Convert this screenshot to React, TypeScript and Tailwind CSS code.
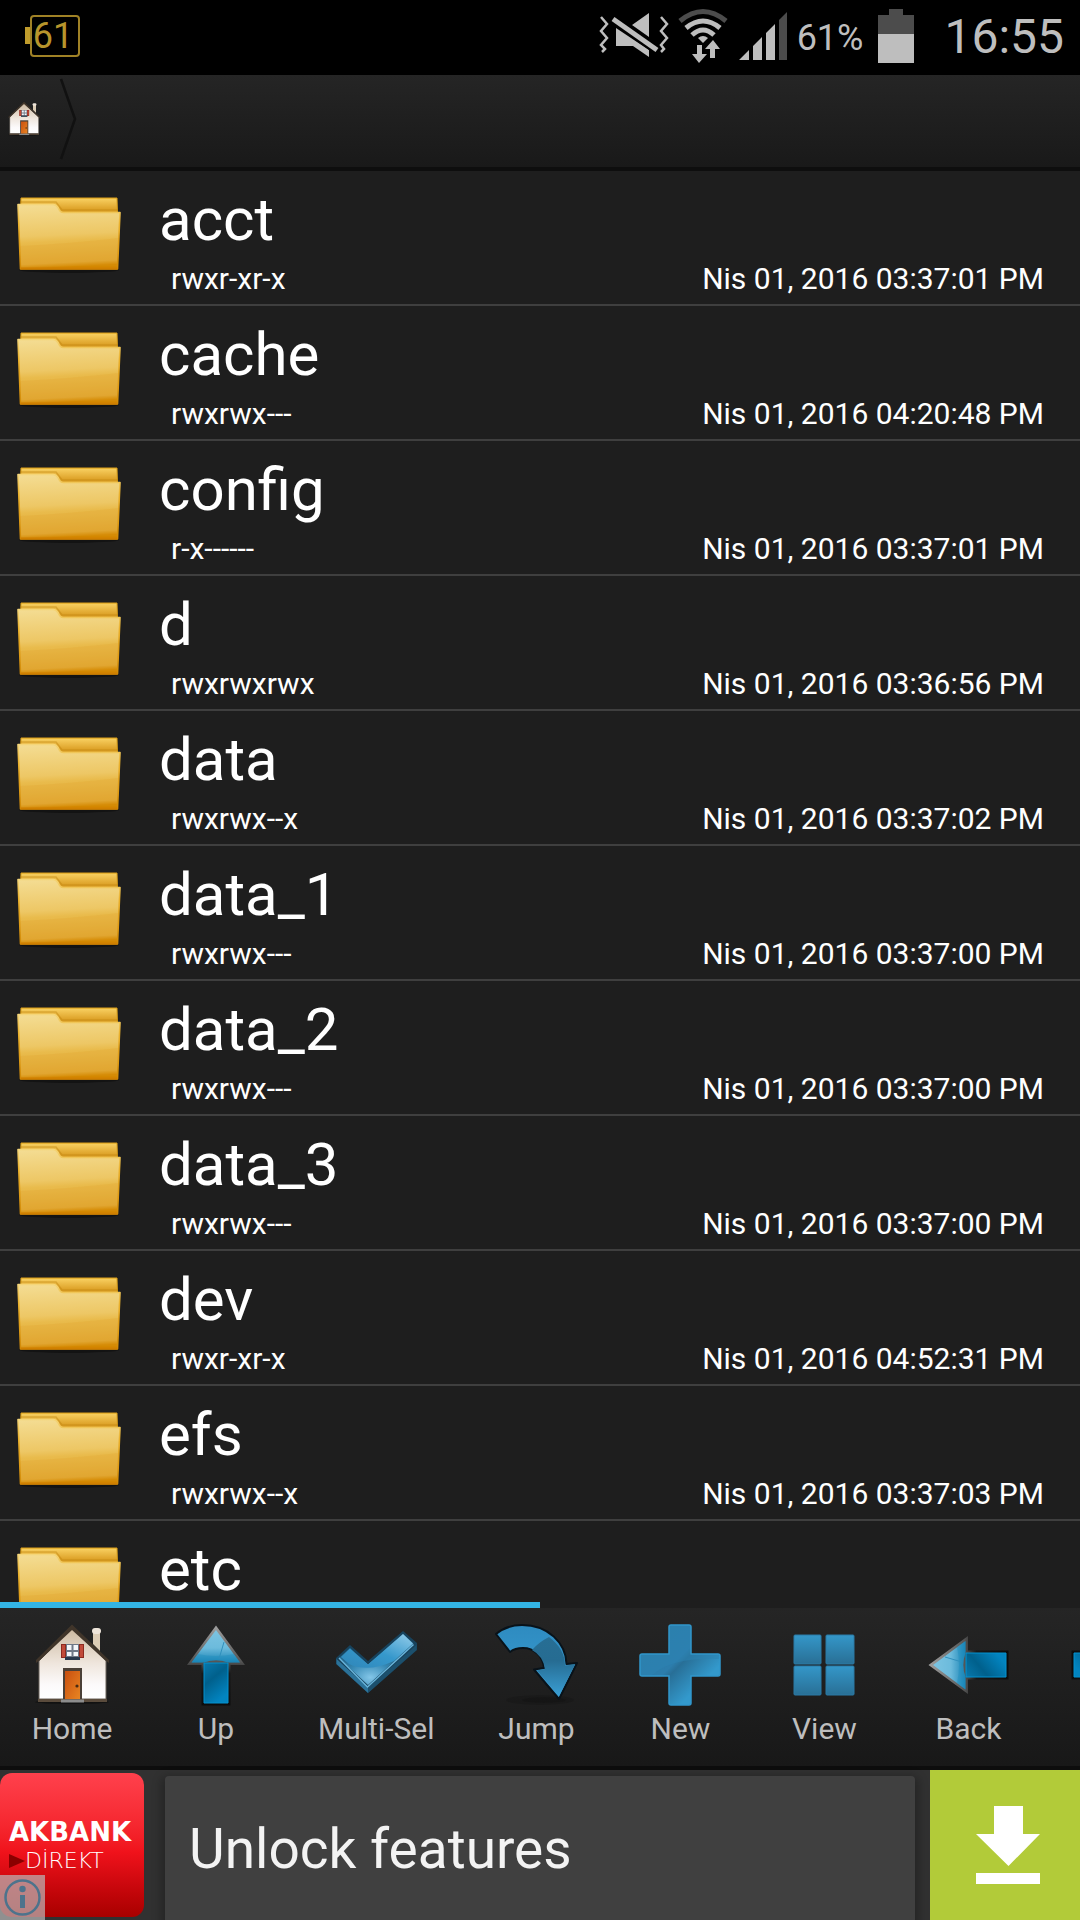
import React from 'react';

interface Entry {
  name: string;
  perms: string;
  time: string;
}

const entries: Entry[] = [
  { name: 'acct', perms: 'rwxr-xr-x', time: '03:37:01 PM' },
  { name: 'cache', perms: 'rwxrwx---', time: '04:20:48 PM' },
  { name: 'config', perms: 'r-x------', time: '03:37:01 PM' },
  { name: 'd', perms: 'rwxrwxrwx', time: '03:36:56 PM' },
  { name: 'data', perms: 'rwxrwx--x', time: '03:37:02 PM' },
  { name: 'data_1', perms: 'rwxrwx---', time: '03:37:00 PM' },
  { name: 'data_2', perms: 'rwxrwx---', time: '03:37:00 PM' },
  { name: 'data_3', perms: 'rwxrwx---', time: '03:37:00 PM' },
  { name: 'dev', perms: 'rwxr-xr-x', time: '04:52:31 PM' },
  { name: 'efs', perms: 'rwxrwx--x', time: '03:37:03 PM' },
  { name: 'etc', perms: '', time: '' },
];

// Gradients shared by all the icons
const IconDefs = () => (
  <svg width="0" height="0" className="absolute" aria-hidden="true">
    <defs>
      <linearGradient id="folderBack" x1="0" y1="0" x2="0" y2="1">
        <stop offset="0" stopColor="#f3c344" />
        <stop offset="0.04" stopColor="#f6cc5c" />
        <stop offset="0.3" stopColor="#dfa52c" />
        <stop offset="1" stopColor="#c98200" />
      </linearGradient>
      <linearGradient id="folderFront" x1="0" y1="0" x2="0.08" y2="1">
        <stop offset="0" stopColor="#f4dd94" />
        <stop offset="0.5" stopColor="#edc765" />
        <stop offset="0.6" stopColor="#e9bb4c" />
        <stop offset="0.93" stopColor="#e2a935" />
        <stop offset="1" stopColor="#d48800" />
      </linearGradient>
      <linearGradient id="folderEdge" x1="0" y1="0" x2="0" y2="1">
        <stop offset="0" stopColor="#f5d679" />
        <stop offset="0.3" stopColor="#eab02a" />
        <stop offset="1" stopColor="#d28a06" />
      </linearGradient>
      <linearGradient id="wall" x1="0" y1="0" x2="0" y2="1">
        <stop offset="0" stopColor="#cbb89f" />
        <stop offset="0.5" stopColor="#efe6dd" />
        <stop offset="0.8" stopColor="#fcfafb" />
        <stop offset="1" stopColor="#ffffff" />
      </linearGradient>
      <linearGradient id="door" x1="0" y1="0" x2="1" y2="1">
        <stop offset="0" stopColor="#c94f10" />
        <stop offset="1" stopColor="#e98622" />
      </linearGradient>
      <linearGradient id="arrowHead" x1="0" y1="0" x2="0" y2="1">
        <stop offset="0" stopColor="#7cc4e2" />
        <stop offset="0.55" stopColor="#6cbbdc" />
        <stop offset="1" stopColor="#1782b4" />
      </linearGradient>
      <linearGradient id="arrowShaft" x1="0" y1="0" x2="0.5" y2="1">
        <stop offset="0" stopColor="#0878ac" />
        <stop offset="0.45" stopColor="#00608c" />
        <stop offset="1" stopColor="#0284c0" />
      </linearGradient>
      <linearGradient id="arrowEdge" x1="0" y1="0" x2="0" y2="1">
        <stop offset="0" stopColor="#a0a0a0" />
        <stop offset="0.45" stopColor="#555555" />
        <stop offset="0.6" stopColor="#181818" />
        <stop offset="1" stopColor="#0c0c0c" />
      </linearGradient>
      <linearGradient id="checkFace" x1="0" y1="1" x2="1" y2="0">
        <stop offset="0" stopColor="#2f86b8" />
        <stop offset="0.5" stopColor="#3698cc" />
        <stop offset="1" stopColor="#94cdea" />
      </linearGradient>
      <radialGradient id="checkGlow" cx="0.42" cy="0.85" r="0.5">
        <stop offset="0" stopColor="#83c6e8" />
        <stop offset="0.6" stopColor="#3588b4" />
        <stop offset="1" stopColor="#22668c" />
      </radialGradient>
      <linearGradient id="jump" x1="0" y1="0" x2="0" y2="1">
        <stop offset="0" stopColor="#2e8bc0" />
        <stop offset="1" stopColor="#3a9ed4" />
      </linearGradient>
      <linearGradient id="jumpShade" x1="0" y1="0" x2="0" y2="1">
        <stop offset="0" stopColor="#276e94" />
        <stop offset="0.4" stopColor="#266c92" />
        <stop offset="1" stopColor="#3a9ed4" />
      </linearGradient>
      <linearGradient id="plus" x1="0" y1="0" x2="1" y2="1">
        <stop offset="0" stopColor="#2b7ba5" />
        <stop offset="0.45" stopColor="#2c7dac" />
        <stop offset="0.5" stopColor="#286f97" />
        <stop offset="0.75" stopColor="#3399cc" />
        <stop offset="1" stopColor="#3399cc" />
      </linearGradient>
      <linearGradient id="tile" x1="0" y1="0" x2="0" y2="1">
        <stop offset="0" stopColor="#3497c9" />
        <stop offset="1" stopColor="#296f95" />
      </linearGradient>
    </defs>
  </svg>
);

const FolderIcon = () => (
  <svg viewBox="0 0 108 84" className="h-[84px] w-[108px] shrink-0" aria-hidden="true">
    <ellipse cx="54" cy="77" rx="50" ry="3" fill="#000000" opacity="0.35" />
    <path d="M6 5 H102 L103 40 H5 Z" fill="url(#folderBack)" stroke="#d99d18" strokeWidth="1" />
    <path d="M5 9 H41 L47 17 H103" fill="none" stroke="#b97c08" strokeWidth="1.5" opacity="0.4" />
    <path
      d="M3 11.500 H38 Q41 11.500 43 14.500 Q45 19.500 48.500 19.500 H105 L102.500 76 H5.500 Z"
      fill="url(#folderFront)"
      stroke="url(#folderEdge)"
      strokeWidth="1.600"
      strokeLinejoin="round"
    />
    <path d="M5 53 Q60 50 104 45 L102 73 H6 Z" fill="#dc9a22" opacity="0.18" />
    <path d="M5.500 75.500 H102.500" stroke="#cf7f00" strokeWidth="2" />
  </svg>
);

const HouseIcon = ({ className }: { className: string }) => (
  <svg viewBox="0 0 84 84" className={className} aria-hidden="true">
    <ellipse cx="42" cy="79" rx="37" ry="2" fill="#000000" opacity="0.4" />
    <path d="M63 9 H70 V28 L63 21 Z" fill="#dccdb6" />
    <rect x="62" y="5" width="9" height="6" rx="3" fill="#eee5da" />
    <path d="M9 38 L42 5 L76 38 V76 H9 Z" fill="url(#wall)" stroke="#6d655d" strokeWidth="1" />
    <path d="M6 40 V37 L42 1.500 L79 37 V40 L75 37 L42 7 L10 37 Z" fill="#40352a" />
    <rect x="31" y="21" width="23" height="14" fill="#8c2a1f" />
    <rect x="32" y="22" width="3" height="12" fill="#c14a39" />
    <rect x="50" y="22" width="3" height="12" fill="#c14a39" />
    <rect x="36" y="21" width="13" height="14" fill="#6e7887" />
    <path d="M37 22 H41.500 V27 H37 Z M43.500 22 H48 V27 H43.500 Z M37 29 H41.500 V33 H37 Z M43.500 29 H48 V33 H43.500 Z" fill="#f3f6fa" />
    <rect x="35" y="34" width="15" height="3" fill="#28384c" />
    <rect x="33" y="45" width="19" height="33" fill="#4a4038" />
    <rect x="35" y="48" width="15" height="29" fill="url(#door)" />
    <circle cx="47" cy="63" r="1.600" fill="#4a2a12" />
    <rect x="8" y="76" width="69" height="3" fill="#5a4b3c" />
    <rect x="31" y="76.500" width="23" height="3" fill="#8c8c8c" />
  </svg>
);

const ArrowIcon = ({ turn = '' }: { turn?: string }) => (
  <svg viewBox="0 0 84 84" className={`size-[84px] ${turn}`} aria-hidden="true">
    <path d="M42 2.500 L71 42 H56.500 V82.500 H27.500 V42 H13 Z" fill="url(#arrowEdge)" />
    <path d="M30 40 H54 V80 H30 Z" fill="url(#arrowShaft)" stroke="#0391cf" strokeWidth="1" />
    <path d="M42 7 L66 39.500 H54 Q42 35 30 39.500 H17.500 Z" fill="url(#arrowHead)" />
    <path d="M17.500 39.500 L24 31 Q42 35 60 31 L66 39.500 H54 Q42 35 30 39.500 Z" fill="#1c8bbd" opacity="0.4" />
    <path d="M50 19 L45 36" stroke="#2f90bd" strokeWidth="1" />
  </svg>
);

const CheckIcon = () => (
  <svg viewBox="0 0 84 84" className="size-[84px]" aria-hidden="true">
    <path d="M2 35 L16 22 L34 38 L69 8 L83 20 V27 L34 70 L2 41 Z" fill="#17425c" />
    <path d="M2.500 36 L34 64.500 V70 L2.500 41 Z" fill="#2b7299" />
    <path d="M34 64.500 L82.500 22 V27 L34 70 Z" fill="#1c506d" />
    <path d="M5 35 L16 25 L34 41.500 L69 11 L79.500 20.500 L34 62 Z" fill="url(#checkGlow)" />
    <path d="M7 34 L16 25.500 L34 41.500 L69 11 L79 20.500 L60 38 Q34 50 15 41 Z" fill="url(#checkFace)" />
    <path d="M5 35 L33.500 64 L79.500 21.500" fill="none" stroke="#68b4da" strokeWidth="1.500" />
  </svg>
);

const JumpIcon = () => (
  <svg viewBox="0 0 84 84" className="size-[84px] overflow-visible" aria-hidden="true">
    <ellipse cx="46" cy="77" rx="34" ry="5" fill="#000000" opacity="0.12" />
    <ellipse cx="50" cy="77" rx="22" ry="3" fill="#000000" opacity="0.12" />
    <path
      d="M2 11 Q13 2 28 2 C54 2 72 20 72.500 41 L83 40 L65 76 L40 46.500 L50 45 C49 33 40 25 29 25 Q21 25 16 29 Z"
      fill="url(#jump)"
      stroke="#091219"
      strokeWidth="2"
      strokeLinejoin="round"
    />
    <path d="M55 14 Q45 19 38 27 Q49 33 51 46 L43 47.500 L65 73 L81 41.500 L71 42.500 Q71 26 55 14 Z" fill="url(#jumpShade)" />
  </svg>
);

const PlusIcon = () => (
  <svg viewBox="0 0 84 84" className="size-[84px]" aria-hidden="true">
    <path
      d="M33 2 H51 Q53 2 53 4 V31 H80 Q82 31 82 33 V51 Q82 53 80 53 H53 V80 Q53 82 51 82 H33 Q31 82 31 80 V53 H4 Q2 53 2 51 V33 Q2 31 4 31 H31 V4 Q31 2 33 2 Z"
      fill="url(#plus)"
      stroke="#3197cb"
      strokeWidth="1.500"
    />
    <path d="M14 52 Q35 34 81 36 V32 H52 V3 H32 V32 H3 V52 Z" fill="#2c83b4" opacity="0.5" />
  </svg>
);

const TilesIcon = () => (
  <svg viewBox="0 0 84 84" className="size-[84px]" aria-hidden="true">
    <g fill="url(#tile)" stroke="#2a7aa6" strokeWidth="1">
      <rect x="12" y="12" width="27" height="29" rx="1" />
      <rect x="44" y="12" width="28" height="29" rx="1" />
      <rect x="12" y="43" width="27" height="29" rx="1" />
      <rect x="44" y="43" width="28" height="29" rx="1" />
    </g>
  </svg>
);

const tools = [
  { label: 'Home', icon: <HouseIcon className="size-[84px]" /> },
  { label: 'Up', icon: <ArrowIcon /> },
  { label: 'Multi-Sel', icon: <CheckIcon /> },
  { label: 'Jump', icon: <JumpIcon /> },
  { label: 'New', icon: <PlusIcon /> },
  { label: 'View', icon: <TilesIcon /> },
  { label: 'Back', icon: <ArrowIcon turn="-rotate-90" /> },
];

const StatusBar = () => (
  <div className="flex h-[75px] shrink-0 items-center justify-between bg-black pr-4 pb-1 pl-[25px] text-[#bebebe]">
    <div className="flex items-center">
      <span className="h-[17px] w-[5px] bg-[#c09c2c]" />
      <span className="flex h-[42px] w-[50px] items-center justify-center rounded-sm border-2 border-[#a08226] pr-1 text-4xl text-[#b7952c]">
        61
      </span>
    </div>

    <div className="flex items-center">
      <svg viewBox="0 0 70 56" className="h-14 w-[70px]" aria-hidden="true">
        <path d="M2 9 L8 16 L2 23 L8 30 L2 37 L6 41 L3 44" fill="none" stroke="#bebebe" strokeWidth="2.500" />
        <path d="M62 9 L68 16 L62 23 L68 30 L62 37 L65 41 L62 44" fill="none" stroke="#bebebe" strokeWidth="2.500" />
        <path d="M50 5 V29 L33 17 Z M17 20 L50 42 V49 L34 38 H17 Z" fill="#bebebe" />
        <path d="M14 11 L58 42" stroke="#000000" strokeWidth="9" />
        <path d="M14 11 L58 42" stroke="#bebebe" strokeWidth="5" />
      </svg>
      <svg viewBox="0 0 52 56" className="ml-2 h-14 w-[52px]" aria-hidden="true">
        <g fill="none" stroke="#bebebe" strokeWidth="5">
          <path d="M3 13 Q26 -6 49 13" stroke="#4c4c4c" />
          <path d="M9 20 Q26 6 43 20" />
          <path d="M15 27 Q26 17 37 27" />
        </g>
        <path d="M21 30 Q26 26 31 30 L26 35 Z" fill="#bebebe" />
        <path d="M20 37 H25 V46 H30 L22 55 L15 46 H20 Z M33 50 V41 H28 L36 32 L43 41 H38 V50 Z" fill="#bebebe" />
      </svg>
      <svg viewBox="0 0 48 56" className="ml-[10px] h-14 w-12" aria-hidden="true">
        <path d="M0 52 L10 42 V52 Z M14 52 V38 L23 29 V52 Z M27 52 V25 L36 16 V52 Z" fill="#bebebe" />
        <path d="M40 52 V12 L48 4 V52 Z" fill="#4c4c4c" />
      </svg>
      <span className="mt-1 ml-[10px] text-4xl">61%</span>
      <svg viewBox="0 0 36 54" className="ml-[15px] h-[54px] w-9" aria-hidden="true">
        <path d="M0 6 H11 V0 H25 V6 H36 V25 H0 Z" fill="#4c4c4c" />
        <path d="M0 25 H36 V54 H0 Z" fill="#bebebe" />
      </svg>
      <span className="mt-[3px] ml-[30px] text-5xl">16:55</span>
    </div>
  </div>
);

const App: React.FC = () => {
  return (
    <div className="flex h-screen flex-col overflow-hidden bg-[#1e1e1e] font-[Roboto,sans-serif] text-white">
      <IconDefs />
      <StatusBar />

      {/* Path bar */}
      <nav className="flex h-24 shrink-0 items-center border-b-4 border-[#0e0e0e] bg-linear-to-b from-[#252525] to-[#191919] pb-1 pl-[6px]">
        <a href="#home" aria-label="Home">
          <HouseIcon className="size-9" />
        </a>
        <svg viewBox="0 0 20 84" className="ml-[15px] h-[84px] w-5" aria-hidden="true">
          <path d="M4 2 L18 42 L4 82" fill="none" stroke="#111111" strokeWidth="2.500" />
        </svg>
      </nav>

      {/* File list */}
      <main className="relative min-h-0 flex-1 overflow-hidden">
        <ul>
          {entries.map((entry) => (
            <li key={entry.name} className="flex h-[135px] border-b-2 border-[#3f3f3f] pt-[14px] pr-9 pl-[15px]">
              <div className="pt-2">
                <FolderIcon />
              </div>
              <div className="ml-9 flex-1">
                <h2 className="text-6xl leading-[70px]">{entry.name}</h2>
                {entry.time && (
                  <div className="flex justify-between pl-3 text-3xl leading-[48px]">
                    <span>{entry.perms}</span>
                    <span>Nis 01, 2016 {entry.time}</span>
                  </div>
                )}
              </div>
            </li>
          ))}
        </ul>
        <div className="absolute bottom-0 left-0 h-[6px] w-1/2 bg-[#33b5e5]" />
      </main>

      <div className="flex h-[162px] shrink-0 overflow-hidden border-b-4 border-[#0d0d0d] bg-linear-to-b from-[#252525] to-[#181818]">
        {tools.map((tool) => (
          <button
            key={tool.label}
            className="flex min-w-[144px] shrink-0 flex-col items-center gap-1 px-[30px] pt-[15px] text-3xl leading-9 text-[#bebebe]"
          >
            {tool.icon}
            <span>{tool.label}</span>
          </button>
        ))}
        <button aria-label="Next" className="flex w-36 shrink-0 flex-col items-center pt-[15px]">
          <ArrowIcon turn="rotate-90" />
        </button>
      </div>

      {/* Ad banner */}
      <footer className="flex h-[150px] shrink-0 bg-[#313131]">
        <div className="relative w-36 shrink-0 py-[3px]">
          <div className="flex h-36 flex-col justify-center rounded-xl bg-linear-to-b from-[#ff404c] via-[#f0121b] via-55% to-[#a80000] pl-[9px] font-['DejaVu_Sans',sans-serif]">
            <span className="text-[26px] leading-8 font-bold">AKBANK</span>
            <span className="flex items-center text-[22px] leading-[26px] font-extralight">
              <svg viewBox="0 0 16 14" className="h-[14px] w-4" aria-hidden="true">
                <path d="M0 0 L16 7 L0 14 Z" fill="#8a0000" />
              </svg>
              DİREKT
            </span>
          </div>
          <button aria-label="Ad info" className="absolute bottom-0 left-0 size-[45px] bg-[#b9b9b9]/70">
            <svg viewBox="0 0 45 45" aria-hidden="true">
              <circle cx="22.500" cy="22.500" r="17" fill="none" stroke="#4d738c" strokeWidth="2.500" />
              <circle cx="22.500" cy="14" r="3.200" fill="#4d738c" />
              <rect x="20" y="20" width="5" height="13" fill="#4d738c" />
            </svg>
          </button>
        </div>
        <a
          href="#unlock"
          className="mt-[6px] mr-[15px] ml-[21px] flex flex-1 items-center rounded-t-sm bg-[#404040] pt-[3px] pl-6 text-[55px] text-[#f3f3f3] shadow-[0_4px_10px_4px_rgba(0,0,0,0.25)]"
        >
          Unlock features
        </a>
        <button aria-label="Download" className="relative flex w-[150px] shrink-0 items-center justify-center bg-[#b2cb39] pl-[6px]">
          <svg viewBox="0 0 64 78" className="h-[78px] w-16" aria-hidden="true">
            <path d="M18 0 H47 V28 H64 L32.500 60 L0 28 H18 Z M0 67 H64 V78 H0 Z" fill="#ffffff" />
          </svg>
        </button>
      </footer>
    </div>
  );
};

export default App;
